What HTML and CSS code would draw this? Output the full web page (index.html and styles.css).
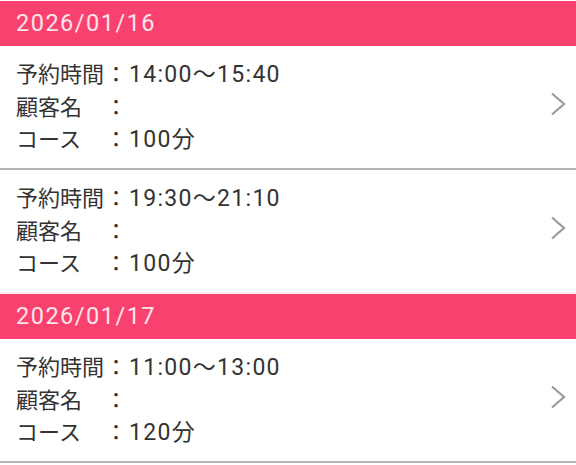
FILE: index.html
```html
<!DOCTYPE html>
<html lang="ja">
<head>
<meta charset="utf-8">
<link rel="stylesheet" href="styles.css">
</head>
<body>
<div class="list">
  <div class="date-head">2026/01/16</div>
  <div class="item">
    <div class="info">
      <div class="line"><span class="label">予約時間</span><span class="colon">：</span><span class="val">14:00〜15:40</span></div>
      <div class="line"><span class="label">顧客名</span><span class="colon">：</span><span class="val"></span></div>
      <div class="line"><span class="label">コース</span><span class="colon">：</span><span class="val">100分</span></div>
    </div>
    <svg class="chev" viewBox="0 0 16 24" width="16" height="24"><path d="M2 1.5 L14 12 L2 22.5" fill="none" stroke="#9a9a9a" stroke-width="2.2"/></svg>
  </div>
  <div class="item last">
    <div class="info">
      <div class="line"><span class="label">予約時間</span><span class="colon">：</span><span class="val">19:30〜21:10</span></div>
      <div class="line"><span class="label">顧客名</span><span class="colon">：</span><span class="val"></span></div>
      <div class="line"><span class="label">コース</span><span class="colon">：</span><span class="val">100分</span></div>
    </div>
    <svg class="chev" viewBox="0 0 16 24" width="16" height="24"><path d="M2 1.5 L14 12 L2 22.5" fill="none" stroke="#9a9a9a" stroke-width="2.2"/></svg>
  </div>
  <div class="date-head">2026/01/17</div>
  <div class="item">
    <div class="info">
      <div class="line"><span class="label">予約時間</span><span class="colon">：</span><span class="val">11:00〜13:00</span></div>
      <div class="line"><span class="label">顧客名</span><span class="colon">：</span><span class="val"></span></div>
      <div class="line"><span class="label">コース</span><span class="colon">：</span><span class="val">120分</span></div>
    </div>
    <svg class="chev" viewBox="0 0 16 24" width="16" height="24"><path d="M2 1.5 L14 12 L2 22.5" fill="none" stroke="#9a9a9a" stroke-width="2.2"/></svg>
  </div>
</div>
</body>
</html>
```
FILE: styles.css
```css
html, body {
  margin: 0;
  padding: 0;
  background: #ffffff;
}
body {
  font-family: Roboto, "Noto Sans CJK JP", sans-serif;
  color: #333333;
}
.list {
  padding-top: 1px;
  display: flex;
  flex-direction: column;
}
.date-head {
  background: #f9416f;
  color: #fde3ea;
  height: 45px;
  line-height: 45px;
  padding-left: 16px;
  font-size: 23.5px;
  letter-spacing: 1.5px;
}
.item {
  display: flex;
  align-items: center;
  justify-content: space-between;
  height: 122px;
  padding: 0 10px 0 16px;
  border-bottom: 2px solid #b4b4b4;
}
.item.last {
  border-bottom: 2px solid #f7eef1;
}
.info {
  display: flex;
  flex-direction: column;
  padding-top: 2px;
}
.line {
  display: flex;
  font-size: 22px;
  line-height: 32.5px;
  white-space: nowrap;
}
.label {
  width: 88px;
}
.colon {
  width: 24px;
  text-align: center;
}
.val {
  padding-left: 1px;
  font-size: 23px;
  letter-spacing: 1.3px;
}
.chev {
  display: block;
  margin-top: -6px;
}
```
